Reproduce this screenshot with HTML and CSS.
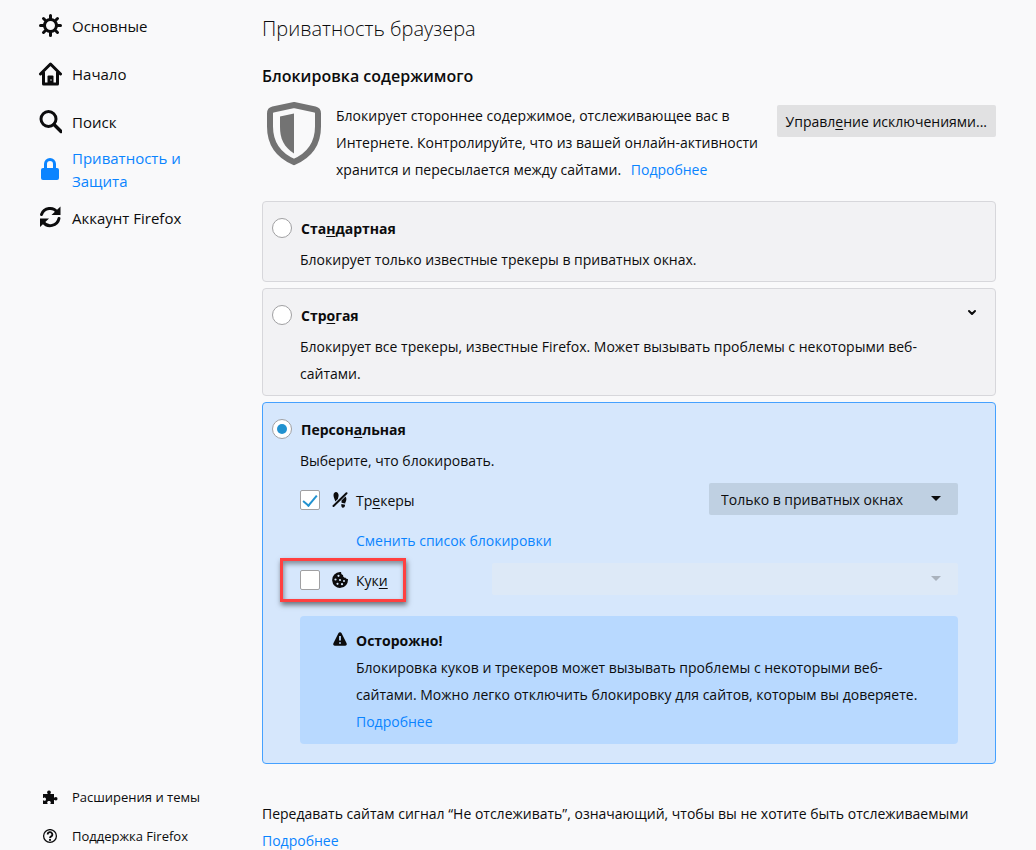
FILE: index.html
```html
<!DOCTYPE html>
<html lang="ru">
<head>
  <meta charset="UTF-8">
  <meta name="viewport" content="width=device-width, initial-scale=1.0">
  <title>Настройки</title>
  <link rel="stylesheet" href="styles.css">
</head>
<body>

  <div class="page">
    <!-- Left navigation -->
    <nav class="sidebar">
      <div class="categories">
        <a class="category" href="#general">
          <svg class="category-icon" viewBox="0 0 24 24" fill="none" stroke="currentColor" stroke-width="3" stroke-linecap="round">
            <circle cx="12.500" cy="11.500" r="6"/>
            <path d="M12.500 1.500v3M12.500 18.500v3M2.500 11.500h3M19.500 11.500h3M5.500 4.500l2 2M17.500 16.500l2 2M5.500 18.500l2-2M17.500 6.500l2-2"/>
          </svg>
          <span>Основные</span>
        </a>
        <a class="category" href="#home">
          <svg class="category-icon" viewBox="0 0 24 24" fill="none" stroke="currentColor" stroke-width="3" stroke-linecap="round" stroke-linejoin="round">
            <path d="M2.500 12L12.500 2l10 10M5.500 10.500v11.500h14V10.500"/>
            <path d="M9.500 22v-7.500q0-1 1-1h4q1 0 1 1V22z" fill="currentColor" stroke="none"/>
            <path d="M12.500 18h1" stroke="#f9f9fa" stroke-width="1.500" stroke-linecap="butt"/>
          </svg>
          <span>Начало</span>
        </a>
        <a class="category" href="#search">
          <svg class="category-icon" viewBox="0 0 24 24" fill="none" stroke="currentColor" stroke-width="3" stroke-linecap="round">
            <circle cx="10.500" cy="9" r="7.500"/>
            <path d="M16 14.500l7 7" stroke-width="3.400"/>
          </svg>
          <span>Поиск</span>
        </a>
        <a class="category selected" href="#privacy">
          <svg class="category-icon" viewBox="0 0 24 24">
            <path d="M7.500 11V6a4.500 4.500 0 0 1 9 0V11" fill="none" stroke="currentColor" stroke-width="3"/>
            <rect x="3" y="10" width="18" height="12" rx="2" fill="currentColor"/>
          </svg>
          <span>Приватность и Защита</span>
        </a>
        <a class="category" href="#sync">
          <svg class="category-icon" viewBox="0 0 24 24" fill="none" stroke="currentColor" stroke-width="3" stroke-linecap="round">
            <path d="M3.500 8.500a9 9 0 0 1 16-2M21 12.500a9 9 0 0 1-16 3.500"/>
            <path d="M22.500 .5v8.500H13.500zM2 21V12.500h9z" fill="currentColor" stroke="none"/>
          </svg>
          <span>Аккаунт Firefox</span>
        </a>
      </div>
      <div class="sidebar-footer">
        <a class="footer-link" href="#addons">
          <svg class="footer-icon" viewBox="0 0 16 16" fill="currentColor">
            <path d="M1 4h4.300c.3 0 .5-.3.300-.6A1.900 1.900 0 0 1 5.100 2.200 1.800 1.800 0 0 1 7 .5a1.800 1.800 0 0 1 1.900 1.700c0 .5-.2.900-.5 1.200-.2.300 0 .6.300.6H12v3.300c0 .3.300.5.600.3.300-.3.700-.6 1.300-.6A1.700 1.700 0 0 1 15.500 8.800a1.700 1.700 0 0 1-1.600 1.800c-.6 0-1-.2-1.300-.5-.3-.2-.6 0-.6.300V14H8.700c-.3 0-.4-.3-.3-.6.300-.3.400-.6.400-1 0-.8-.8-1.400-1.800-1.400s-1.800.6-1.800 1.400c0 .4.100.7.400 1 .1.300 0 .6-.3.600H1v-3.300c0-.3.300-.5.600-.3.300.3.600.4 1 .4C3.400 11.100 4 10.200 4 9.300s-.6-1.700-1.400-1.700c-.4 0-.7.1-1 .4-.3.200-.6 0-.6-.3z"/>
          </svg>
          <span>Расширения и темы</span>
        </a>
        <a class="footer-link" href="#support">
          <svg class="footer-icon" viewBox="0 0 16 16" fill="none" stroke="currentColor">
            <circle cx="8" cy="7" r="6.400" stroke-width="1.300"/>
            <path d="M5.700 5.500a2.300 2.300 0 1 1 3.500 1.900C8.300 7.900 8 8.200 8 9" stroke-width="1.800"/>
            <circle cx="8" cy="10.900" r="1.100" fill="currentColor" stroke="none"/>
          </svg>
          <span>Поддержка Firefox</span>
        </a>
      </div>
    </nav>

    <!-- Privacy pane -->
    <main class="content">
      <h1 class="title">Приватность браузера</h1>
      <h2 class="subtitle">Блокировка содержимого</h2>

      <div class="intro">
        <svg class="shield" viewBox="0 0 54 64">
          <path d="M27 3L48 7.500q3 .7 3 4v13c0 17-9 29-24 35.500C12 53.500 3 41.500 3 24.500V11.500q0-3.300 3-4z" fill="none" stroke="#737373" stroke-width="6"/>
          <path d="M27 11.500v40C17 45 13 37 13 25V14.500z" fill="#737373"/>
        </svg>
        <p class="intro-text">Блокирует стороннее содержимое, отслеживающее вас в Интернете. Контролируйте, что из вашей онлайн-активности хранится и пересылается между сайтами. <a class="link more" href="#more">Подробнее</a></p>
        <button class="button" type="button">Управл<u>е</u>ние исключениями...</button>
      </div>

      <section class="card">
        <label class="card-title">
          <input class="radio" type="radio" name="blocking">
          <span>Ста<u>н</u>дартная</span>
        </label>
        <p class="card-text">Блокирует только известные трекеры в приватных окнах.</p>
      </section>

      <section class="card">
        <div class="card-head">
          <label class="card-title">
            <input class="radio" type="radio" name="blocking">
            <span>Стр<u>о</u>гая</span>
          </label>
          <button class="expander" type="button" aria-label="Подробности">
            <svg class="chevron" viewBox="0 0 10 8" fill="none" stroke="currentColor" stroke-width="2" stroke-linecap="round" stroke-linejoin="round">
              <path d="M2 2l3 3 3-3"/>
            </svg>
          </button>
        </div>
        <p class="card-text">Блокирует все трекеры, известные Firefox. Может вызывать проблемы с некоторыми веб-сайтами.</p>
      </section>

      <section class="card active">
        <label class="card-title">
          <input class="radio" type="radio" name="blocking" checked>
          <span>Персон<u>а</u>льная</span>
        </label>
        <p class="card-text">Выберите, что блокировать.</p>

        <div class="options">
          <div class="option">
            <label class="option-label">
              <input class="checkbox" type="checkbox" checked>
              <svg class="option-icon" viewBox="0 0 16 16" fill="currentColor">
                <path d="M1.500 3.200C1.500 1.400 2.600.1 4 .1s2.600 1.400 2.600 3.200c0 1.500-.5 2.400-.7 3.800L3.200 9.500C3 7.200 1.500 5.500 1.500 3.200z"/>
                <path d="M9.500 8.500l4-4c.6.700.9 1.600.9 2.600 0 2-1 3-1.200 4.300l-3.600-.7c0-.8-.2-1.400-.1-2.200zM9.400 12l3.700.7c-.1 1.800-.9 3-2.200 3S9 14 9.400 12z"/>
                <path d="M1.500 14L14.500 1.300" stroke="currentColor" stroke-width="2" stroke-linecap="round"/>
              </svg>
              <span>Тр<u>е</u>керы</span>
            </label>
            <div class="select-box">
              <select class="select" aria-label="Трекеры">
                <option>Только в приватных окнах</option>
              </select>
            </div>
          </div>

          <a class="link change-list" href="#list">Сменить список блокировки</a>

          <div class="option">
            <label class="option-label highlighted">
              <input class="checkbox" type="checkbox">
              <svg class="option-icon" viewBox="0 0 16 16">
                <path d="M8 .1c.4 0 .9 0 1.200.2-.2 1.600.6 2.600 1.900 2.800-.2 1.700.8 2.700 2.200 2.500.3 1.100 1.300 1.600 2.600 1.400A7.900 7.900 0 1 1 8 .1z" fill="currentColor"/>
                <g class="crumbs">
                  <circle cx="6.500" cy="3.800" r="1.100"/>
                  <circle cx="3.500" cy="7.500" r="1.100"/>
                  <circle cx="8" cy="8" r="1.100"/>
                  <circle cx="5.500" cy="11.800" r="1.100"/>
                  <circle cx="10" cy="12.200" r="1.100"/>
                  <circle cx="12" cy="9" r="1"/>
                </g>
              </svg>
              <span>Кук<u>и</u></span>
            </label>
            <div class="select-box wide disabled">
              <select class="select" aria-label="Куки" disabled>
                <option></option>
              </select>
            </div>
          </div>
        </div>

        <div class="warning">
          <svg class="warning-icon" viewBox="0 0 16 16">
            <path d="M8 1.200c.7 0 1.300.4 1.600 1l5 10c.6 1.300-.2 2.600-1.500 2.600H2.900c-1.300 0-2.100-1.300-1.500-2.600l5-10c.3-.6.900-1 1.600-1z" fill="currentColor"/>
            <path d="M8 5v4.500M8 11.200v1.600" stroke="#b8d9ff" stroke-width="1.800"/>
          </svg>
          <div>
            <strong class="warning-title">Осторожно!</strong>
            <p class="warning-text">Блокировка куков и трекеров может вызывать проблемы с некоторыми веб-сайтами. Можно легко отключить блокировку для сайтов, которым вы доверяете. <a class="link" href="#more">Подробнее</a></p>
          </div>
        </div>
      </section>

      <p class="dnt">Передавать сайтам сигнал “Не отслеживать”, означающий, чтобы вы не хотите быть отслеживаемыми <a class="link" href="#more">Подробнее</a></p>
    </main>
  </div>

</body>
</html>
```
FILE: styles.css
```css
* {
  box-sizing: border-box;
}

body {
  margin: 0;
  background-color: #f9f9fa;
  color: #0c0c0d;
  font-family: "Open Sans", "Noto Sans", sans-serif;
  font-size: 14px;
  line-height: 27px;
}

h1, h2, p {
  margin: 0;
}

a {
  color: inherit;
  text-decoration: none;
}

u {
  text-underline-offset: 2px;
}

.page {
  display: flex;
  height: 100vh;
  overflow: hidden;
}

/* Sidebar */
.sidebar {
  flex: 0 0 262px;
  display: flex;
  flex-direction: column;
  justify-content: space-between;
  padding: 2px 60px 0 38px;
}

.category {
  display: flex;
  align-items: center;
  gap: 10px;
  height: 48px;
  font-size: 15px;
  line-height: 23px;
}

.category.selected {
  color: #0a84ff;
}

.category-icon {
  flex: none;
  width: 24px;
  height: 24px;
}

.footer-link {
  display: flex;
  align-items: center;
  gap: 14px;
  height: 39px;
  padding-left: 4px;
  font-size: 13px;
}

.sidebar-footer {
  margin-bottom: -6px;
}

.footer-icon {
  flex: none;
  width: 16px;
  height: 16px;
}

/* Main pane */
.content {
  flex: 1;
  min-width: 0;
  padding: 13px 40px 0 0;
}

.title {
  font-size: 20px;
  font-weight: 300;
  line-height: 32px;
}

.subtitle {
  margin-top: 18px;
  font-size: 16px;
  font-weight: 600;
}

.intro {
  display: flex;
  align-items: flex-start;
  margin: 12px 0 18px;
}

.shield {
  flex: none;
  width: 54px;
  height: 64px;
  margin: 0 15px 0 5px;
}

.intro-text {
  flex: 1;
}

.link {
  color: #0a84ff;
}

.more {
  margin-left: 6px;
}

.button {
  flex: none;
  height: 32px;
  margin: 3px 0 0 8px;
  padding: 0 9px;
  border: 0;
  border-radius: 2px;
  background-color: #e1e1e2;
  color: inherit;
  font: inherit;
}

/* Blocking cards */
.card {
  margin-bottom: 6px;
  padding: 16px 37px 8px 9px;
  border: 1px solid #d7d7db;
  border-radius: 4px;
  background-color: #f2f2f4;
}

.card.active {
  padding-bottom: 19px;
  border-color: #45a1ff;
  background-color: #d6e7fc;
}

.card-head {
  display: flex;
  justify-content: space-between;
}

.card-title {
  display: flex;
  align-items: center;
  gap: 9px;
  height: 20px;
  font-weight: 700;
}

.card-text {
  margin: 8px 0 0 28px;
}

.radio,
.checkbox {
  flex: none;
  appearance: none;
  display: grid;
  place-items: center;
  width: 20px;
  height: 20px;
  margin: 0;
  border: 1px solid #a0a0a2;
  background-color: #fff;
}

.radio {
  border-radius: 50%;
}

.radio:checked::before {
  content: "";
  width: 10px;
  height: 10px;
  border-radius: 50%;
  background-color: #2292d0;
}

.checkbox {
  border-radius: 2px;
}

.checkbox:checked::before {
  content: "";
  width: 6px;
  height: 12px;
  margin-bottom: 3px;
  border: solid #2292d0;
  border-width: 0 2px 2px 0;
  transform: rotate(40deg);
}

.expander {
  width: 20px;
  height: 16px;
  margin-right: -24px;
  padding: 0;
  border: 0;
  background: none;
  color: inherit;
  line-height: 0;
}

.chevron {
  width: 10px;
  height: 8px;
}

.options {
  margin: 9px 0 21px 28px;
}

.option {
  display: flex;
  align-items: center;
  justify-content: space-between;
  height: 32px;
}

.option-label {
  position: relative;
  display: flex;
  align-items: center;
  padding-top: 2px;
}

.option-icon {
  width: 16px;
  height: 16px;
  margin: 0 8px 0 12px;
}

.crumbs {
  fill: #d6e7fc;
}

/* Red frame drawn over the row */
.highlighted::after {
  content: "";
  position: absolute;
  inset: -7px -18px -8px -20px;
  border: 3px solid #ff4040;
  box-shadow: 1px 3px 5px rgba(0, 0, 0, 0.5), inset 1px 3px 5px rgba(0, 0, 0, 0.4);
}

.change-list {
  display: block;
  margin: 12px 0 9px 56px;
}

.select-box {
  position: relative;
  width: 249px;
}

.select-box.wide {
  width: 466px;
}

.select-box::after {
  content: "";
  position: absolute;
  top: 13px;
  right: 17px;
  border: 5px solid transparent;
  border-top-color: #0c0c0d;
  border-bottom: 0;
}

.select {
  appearance: none;
  display: block;
  width: 100%;
  height: 32px;
  padding: 0 12px;
  border: 0;
  border-radius: 2px;
  background-color: #bfd0e2;
  color: inherit;
  font: inherit;
}

.disabled .select {
  background-color: #dfe9f5;
}

.select-box.disabled::after {
  border-top-color: #a9b2bd;
}

/* Warning box */
.warning {
  display: flex;
  gap: 8px;
  margin-left: 28px;
  padding: 11px 20px 9px 32px;
  border-radius: 4px;
  background-color: #b8d9ff;
}

.warning-icon {
  flex: none;
  width: 16px;
  height: 16px;
  margin-top: 4px;
}

.warning-title {
  display: block;
  font-weight: 700;
}

.dnt {
  margin-top: 36px;
}
```
